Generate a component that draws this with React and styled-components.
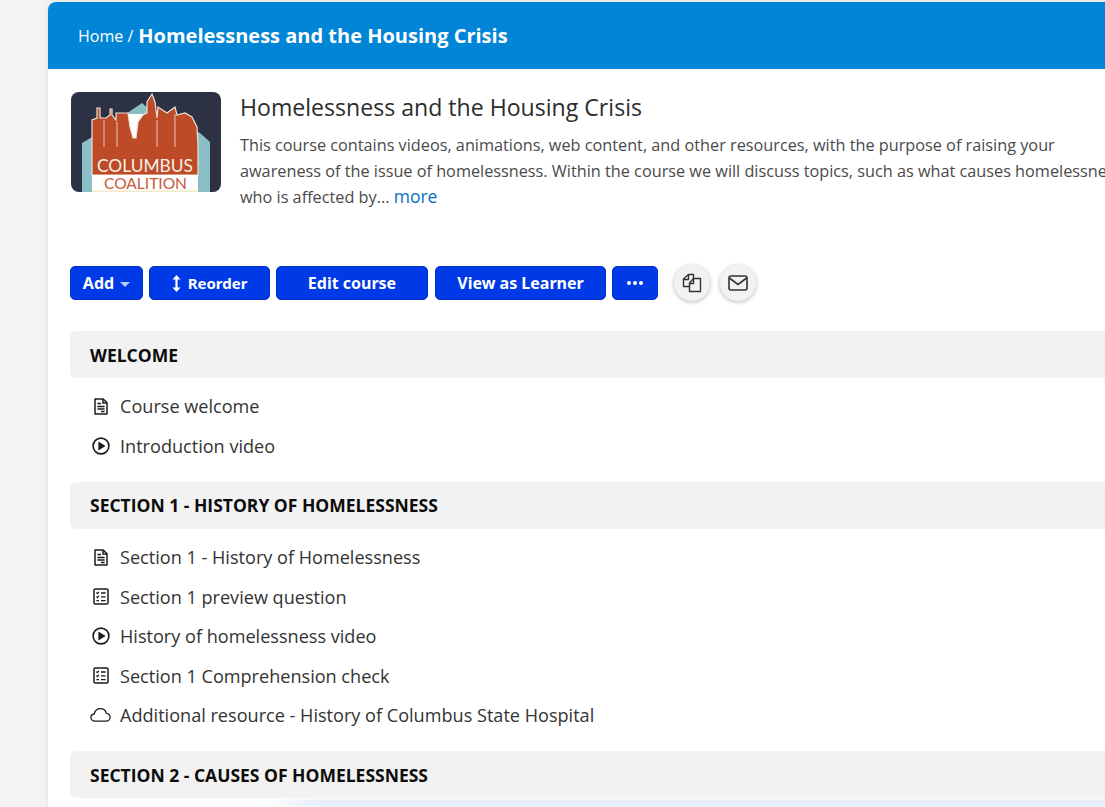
import React from 'react';
import styled, { createGlobalStyle } from 'styled-components';

const GlobalStyle = createGlobalStyle`
  html, body {
    margin: 0;
    height: 100%;
    overflow: hidden;
    background: #f3f3f3;
    font-family: 'Open Sans', 'Liberation Sans', sans-serif;
  }
`;

const DocIcon = () => (
  <svg width="14" height="17" viewBox="0 0 14 17" fill="none" stroke="#1c1c1c" strokeWidth="1.5">
    <path d="M1 1h8.2L13 4.8V16H1z" strokeLinejoin="round" />
    <path d="M9 1v4h4M3.4 5.6h3.6M3.4 8.4h7.2M3.4 10.9h7.2M7 13.5h3.6" />
  </svg>
);

const PlayIcon = () => (
  <svg width="18" height="18" viewBox="0 0 18 18" fill="none">
    <circle cx="9" cy="9" r="7.9" stroke="#1c1c1c" strokeWidth="1.6" />
    <path d="M6.4 4.4v9.2L13.6 9z" fill="#1c1c1c" />
  </svg>
);

const QuizIcon = () => (
  <svg width="16" height="17" viewBox="0 0 16 17" fill="none" stroke="#1c1c1c" strokeWidth="1.5">
    <rect x="1" y="1" width="14" height="15" rx="1.2" />
    <path d="M3.4 4.6l1 1 1.5-1.8M3.4 8.6l1 1 1.5-1.8M3.4 12.6h2.6M8 5h4.6M8 8.8h4.6M8 12.6h4.6" strokeWidth="1.3" />
  </svg>
);

const CloudIcon = () => (
  <svg width="23" height="16" viewBox="0 0 23 16" fill="none" stroke="#1c1c1c" strokeWidth="1.4" strokeLinejoin="round">
    <path d="M5.4 14.8C2.9 14.8 1 13 1 10.8c0-2 1.5-3.6 3.6-3.9C5.4 3.4 8.2 1 11.4 1c3.2 0 5.8 2.2 6.5 5.2 2.4.3 4.1 2.2 4.1 4.4 0 2.3-1.9 4.2-4.4 4.2z" />
  </svg>
);

const CopyIcon = () => (
  <svg width="20" height="20" viewBox="0 0 20 20" fill="none" stroke="#333" strokeWidth="1.4" strokeLinejoin="round">
    <path d="M7 13.5H1.5V6L6.5 1.5h5v4" />
    <path d="M1.5 6.5h5v-5" />
    <path d="M7.5 18.5V10l4-4.5h7v13z" />
    <path d="M7.5 10.5h4v-5" />
  </svg>
);

const MailIcon = () => (
  <svg width="20" height="16" viewBox="0 0 20 16" fill="none" stroke="#333" strokeWidth="1.6">
    <rect x="1" y="1" width="18" height="14" rx="2" />
    <path d="M1.4 3l8.6 6.4L18.6 3" />
  </svg>
);

const ReorderIcon = () => (
  <svg width="9" height="17" viewBox="0 0 9 17" fill="#fff">
    <path d="M4.5 0l4 4.4H5.6v8.2h2.9l-4 4.4-4-4.4h2.9V4.4H.5z" />
  </svg>
);

const Logo = () => (
  <LogoFrame viewBox="0 0 150 100">
    <rect width="150" height="100" fill="#2c3243" />
    <path d="M11 100V51l10-6 50-34 15 13 43 17 10 9v50z" fill="#8bbfc6" />
    <path d="M57 22h18v28H57z" fill="#fff" />
    <path
      d="M21 83V28l5-2V16h3v10h6l4-3v-6h2v6l4 5v-7h12l2 14 3 11h3l2-16 5-7 4-2V10l5-8 3 8 2 16 1-11 9 6 8-6 2 8 8-2 7 4 5 10 1 18v30z"
      fill="#bd4b28"
      stroke="#efe3d8"
      strokeWidth="1.2"
    />
    <path d="M33 28v27M46 30v25M86 28v27M104 22v33" stroke="#efe3d8" strokeWidth="0.8" />
    <rect x="21" y="83" width="106" height="17" fill="#fff" />
    <rect x="21" y="98.5" width="106" height="1.5" fill="#f7e8c6" />
    <LogoWord x="74" y="80" fontSize="17.5" fill="#f7efe6" textLength="96" lengthAdjust="spacingAndGlyphs">COLUMBUS</LogoWord>
    <LogoWord x="74.5" y="97" fontSize="14.5" fill="#c8583a" textLength="83" lengthAdjust="spacingAndGlyphs">COALITION</LogoWord>
  </LogoFrame>
);

const sections = [
  {
    title: 'WELCOME',
    items: [
      { icon: 'doc', label: 'Course welcome' },
      { icon: 'play', label: 'Introduction video' },
    ],
  },
  {
    title: 'SECTION 1 - HISTORY OF HOMELESSNESS',
    items: [
      { icon: 'doc', label: 'Section 1 - History of Homelessness' },
      { icon: 'quiz', label: 'Section 1 preview question' },
      { icon: 'play', label: 'History of homelessness video' },
      { icon: 'quiz', label: 'Section 1 Comprehension check' },
      { icon: 'cloud', label: 'Additional resource - History of Columbus State Hospital' },
    ],
  },
  {
    title: 'SECTION 2 - CAUSES OF HOMELESSNESS',
    items: [],
  },
];

const icons = {
  doc: <DocIcon />,
  play: <PlayIcon />,
  quiz: <QuizIcon />,
  cloud: <CloudIcon />,
};

const App = () => {
  return (
    <>
      <GlobalStyle />
      <Page>
        <Card>
          <Banner>
            <Crumb>Home /</Crumb>
            <BannerTitle>Homelessness and the Housing Crisis</BannerTitle>
          </Banner>

          <Body>
            <Intro>
              <Logo />
              <IntroText>
                <CourseTitle>Homelessness and the Housing Crisis</CourseTitle>
                <Description>
                  This course contains videos, animations, web content, and other resources, with the purpose of raising your
                  awareness of the issue of homelessness. Within the course we will discuss topics, such as what causes homelessness,
                  who is affected by... <More>more</More>
                </Description>
              </IntroText>
            </Intro>

            <Toolbar>
              <Button $width={73}>
                Add <Caret />
              </Button>
              <Button $width={121} $small>
                <ReorderIcon /> Reorder
              </Button>
              <Button $width={152}>Edit course</Button>
              <Button $width={171} $gap={7}>View as Learner</Button>
              <Button $width={46}>
                <Dots />
              </Button>
              <RoundButton $first>
                <CopyIcon />
              </RoundButton>
              <RoundButton>
                <MailIcon />
              </RoundButton>
            </Toolbar>

            {sections.map((section) => (
              <Section key={section.title}>
                <SectionHeader>{section.title}</SectionHeader>
                {section.items.length > 0 && (
                  <ItemList>
                    {section.items.map((item) => (
                      <Item key={item.label}>
                        <ItemIcon>{icons[item.icon]}</ItemIcon>
                        {item.label}
                      </Item>
                    ))}
                  </ItemList>
                )}
              </Section>
            ))}
          </Body>
        </Card>
        <BottomGlow />
      </Page>
    </>
  );
};

// ------------------------------Styled component ------------------------------------

const Page = styled.div`
  position: relative;
  height: 807px;
  width: 1105px;
  overflow: hidden;
  padding: 2px 0 0 48px;
  box-sizing: border-box;
`;

const Card = styled.div`
  width: 1140px;
  min-height: 900px;
  background: #fff;
  border-radius: 8px 8px 0 0;
  box-shadow: 0 0 6px rgba(0, 0, 0, 0.08);
`;

const Banner = styled.div`
  height: 67px;
  background: #0085d7;
  border-radius: 8px 8px 0 0;
  color: #fff;
  display: flex;
  align-items: center;
  gap: 5px;
  padding-left: 30px;
`;

const Crumb = styled.span`
  font-size: 16px;
`;

const BannerTitle = styled.span`
  font-size: 20px;
  font-weight: 700;
`;

const Body = styled.div`
  padding: 23px 0 0 22px;
`;

const Intro = styled.div`
  display: flex;
  gap: 19px;
  height: 174px;
`;

const LogoFrame = styled.svg`
  width: 150px;
  height: 100px;
  border-radius: 8px;
  flex-shrink: 0;
  margin-left: 1px;
`;

const LogoWord = styled.text`
  font-family: 'Lato', 'Liberation Sans', sans-serif;
  text-anchor: middle;
`;

const IntroText = styled.div`
  width: 890px;
`;

const CourseTitle = styled.h1`
  margin: 0;
  font-size: 23.1px;
  font-weight: 400;
  line-height: 30px;
  color: #2d2d2d;
`;

const Description = styled.p`
  margin: 11px 0 0;
  font-size: 16.25px;
  line-height: 25.5px;
  color: #4a4a4a;
`;

const More = styled.a`
  font-size: 17.5px;
  color: #0a6ebd;
`;

const Toolbar = styled.div`
  display: flex;
  align-items: center;
  gap: 6px;
  height: 34px;
`;

const Button = styled.button`
  width: ${(props) => props.$width}px;
  height: 34px;
  margin-left: ${(props) => (props.$gap ? props.$gap - 6 : 0)}px;
  padding: 0;
  border: 1px solid #0231c9;
  border-radius: 5px;
  background: #0039e6;
  color: #fff;
  font-family: 'Noto Sans', sans-serif;
  font-size: ${(props) => (props.$small ? 15 : 16)}px;
  font-weight: 700;
  display: flex;
  align-items: center;
  justify-content: center;
  gap: ${(props) => (props.$small ? 7 : 6)}px;
`;

const Caret = styled.span`
  width: 0;
  height: 0;
  border-left: 5px solid transparent;
  border-right: 5px solid transparent;
  border-top: 5px solid #b9c8f5;
  margin-top: 2px;
`;

const Dots = styled.span`
  width: 4px;
  height: 4px;
  border-radius: 50%;
  background: #fff;
  box-shadow: -6px 0 0 #fff, 6px 0 0 #fff;
`;

const RoundButton = styled.div`
  width: 36px;
  height: 36px;
  margin-left: ${(props) => (props.$first ? 10 : 4)}px;
  border-radius: 50%;
  background: #f2f2f2;
  box-shadow: 0 1px 4px rgba(0, 0, 0, 0.28);
  display: flex;
  align-items: center;
  justify-content: center;
`;

const Section = styled.section`
  margin-top: 31px;
  &:not(:first-of-type) {
    margin-top: 16.6px;
  }
`;

const SectionHeader = styled.h2`
  margin: 0;
  height: 47px;
  padding-left: 20px;
  display: flex;
  align-items: center;
  background: #f2f2f2;
  border-radius: 6px 0 0 6px;
  font-size: 17.5px;
  font-weight: 700;
  color: #0c0c0c;
`;

const ItemList = styled.ul`
  list-style: none;
  margin: 8.4px 0 0;
  padding: 0;
`;

const Item = styled.li`
  height: 39.5px;
  display: flex;
  align-items: center;
  font-size: 18.1px;
  color: #333;
`;

const ItemIcon = styled.span`
  width: 50px;
  padding: 0 9px 0 20px;
  box-sizing: border-box;
  display: flex;
  align-items: center;
  justify-content: center;
`;

const BottomGlow = styled.div`
  position: absolute;
  left: 262px;
  right: 0;
  bottom: 0;
  height: 8px;
  background: linear-gradient(to right, rgba(225, 235, 246, 0), #e6eef8 60px);
  filter: blur(1px);
`;

export default App;
